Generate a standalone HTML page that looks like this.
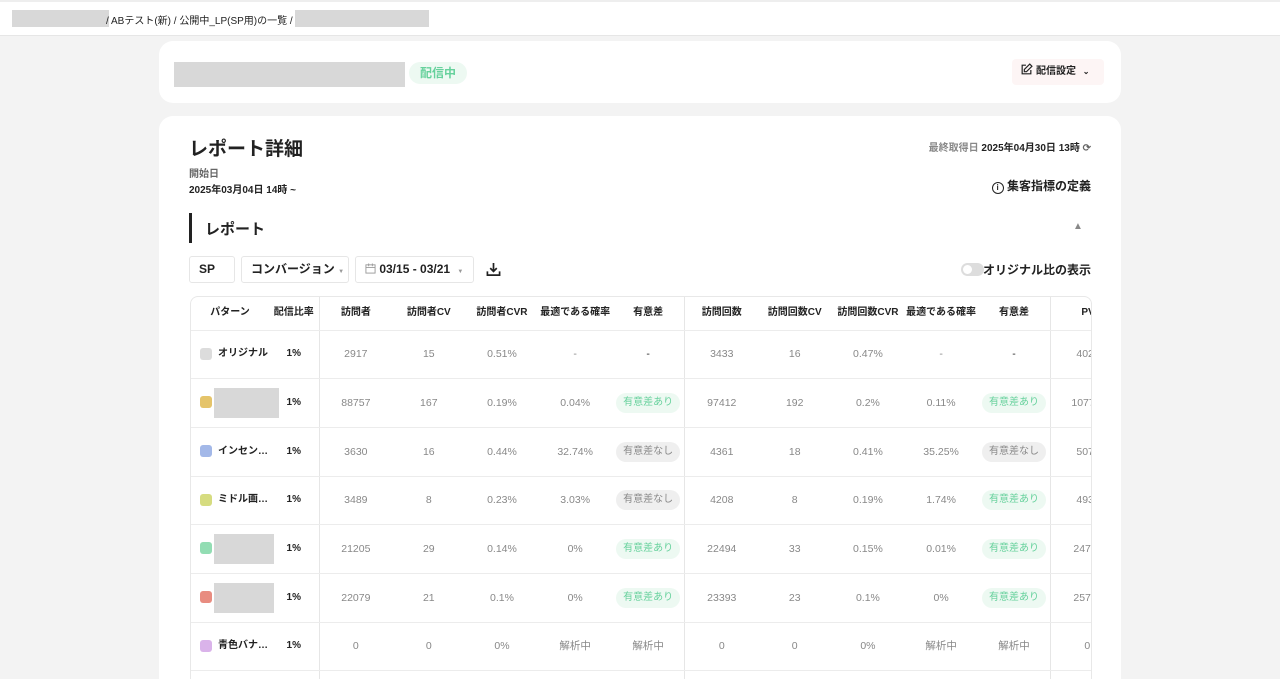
<!DOCTYPE html>
<html><head><meta charset="utf-8">
<style>
*{box-sizing:border-box;margin:0;padding:0}
html,body{width:1280px;height:679px;overflow:hidden}
body{background:#f3f3f3;font-family:"Liberation Sans","Noto Sans CJK JP",sans-serif;color:#222;position:relative}
.top{position:absolute;left:0;top:0;width:1280px;height:36px;background:#fff;border-top:2px solid #eee;border-bottom:1px solid #e6e6e6}
.ph{background:#d8d8d8;position:absolute}
.card{position:absolute;background:#fff;border-radius:14px}
.abs{position:absolute;white-space:nowrap}
.wrap{position:absolute;left:190px;top:296px;width:902px;height:383px;overflow:hidden;border:1px solid #e8e8e8;border-bottom:none;border-radius:8px 8px 0 0}
table{border-collapse:collapse;table-layout:fixed;width:900px}
td,th{height:48.7px;text-align:center;vertical-align:middle;font-size:10.5px;color:#888;border-bottom:1px solid #ececec;white-space:nowrap;overflow:hidden;line-height:14px}
th{height:33px;color:#222;font-weight:bold;font-size:10px}
.bl{border-left:1px solid #e6e6e6}
.pat{text-align:left;padding-left:9px;color:#222;font-weight:bold;font-size:10px;overflow:visible;position:relative}
.sw{display:inline-block;width:12px;height:12px;border-radius:3px;vertical-align:middle;margin-right:6px}
.r{color:#222;font-weight:bold;font-size:10px}
.b{display:inline-block;padding:3px 7px;border-radius:10px;font-size:10px;vertical-align:middle;line-height:14px}
.y{background:#edf9f2;color:#66d19c}
.n{background:#efefef;color:#888}
.pv{text-align:left;padding-left:25px}
.gp{position:absolute;top:9px;left:23px;height:30px;background:#d8d8d8}
</style></head><body>
<div class="top">
<div class="ph" style="left:12px;top:8px;width:97px;height:17px"></div>
<div class="abs" style="left:106px;top:10px;font-size:10px;color:#222">/ ABテスト(新) / 公開中_LP(SP用)の一覧 /</div>
<div class="ph" style="left:295px;top:8px;width:134px;height:17px"></div>
</div>
<div class="card" style="left:159px;top:41px;width:962px;height:62px">
<div class="ph" style="left:15px;top:21px;width:231px;height:25px"></div>
<div class="abs" style="left:250px;top:21px;height:22px;padding:0 11px;line-height:22px;border-radius:11px;background:#edf9f2;color:#66d19c;font-size:12px;font-weight:bold">配信中</div>
<div class="abs" style="left:853px;top:18px;width:92px;height:26px;background:#fdf5f5;border-radius:4px;font-size:10px;font-weight:bold;line-height:26px;padding-left:8px">
<svg width="13" height="13" viewBox="0 0 24 24" style="vertical-align:-2px;margin-right:3px" fill="none" stroke="#222" stroke-width="2.2"><path d="M11 4H4v16h16v-7"/><path d="M18 2l4 4-10 10H8v-4z"/></svg>配信設定 <span style="font-size:8px;margin-left:4px">⌄</span></div>
</div>
<div class="card" style="left:159px;top:116px;width:962px;height:563px;border-radius:14px 14px 0 0">
<div class="abs" style="left:30px;top:18px;font-size:19px;font-weight:bold">レポート詳細</div>
<div class="abs" style="left:30px;top:49px;font-size:10px;color:#666;font-weight:bold">開始日</div>
<div class="abs" style="left:30px;top:65px;font-size:10px;font-weight:bold">2025年03月04日 14時 ~</div>
<div class="abs" style="right:30px;top:23px;font-size:10px;font-weight:bold"><span style="color:#888">最終取得日</span> 2025年04月30日 13時 <span style="color:#666">⟳</span></div>
<div class="abs" style="right:30px;top:61px;font-size:12px;font-weight:bold"><span style="display:inline-block;width:12px;height:12px;border:1.5px solid #222;border-radius:50%;font-size:8px;line-height:9px;text-align:center;vertical-align:0">i</span> 集客指標の定義</div>
<div class="abs" style="left:30px;top:97px;width:3px;height:30px;background:#222"></div>
<div class="abs" style="left:46px;top:102px;font-size:15px;font-weight:bold">レポート</div>
<div class="abs" style="left:914px;top:105px;font-size:10px;color:#888">▲</div>
<div class="abs" style="left:30px;top:140px;width:46px;height:27px;border:1px solid #e6e6e6;border-radius:3px;font-size:12px;font-weight:bold;line-height:25px;padding-left:9px">SP</div>
<div class="abs" style="left:82px;top:140px;width:108px;height:27px;border:1px solid #e6e6e6;border-radius:3px;font-size:12px;font-weight:bold;line-height:25px;padding-left:9px">コンバージョン <span style="font-size:6px;color:#999">▼</span></div>
<div class="abs" style="left:196px;top:140px;width:119px;height:27px;border:1px solid #e6e6e6;border-radius:3px;font-size:12px;font-weight:bold;line-height:25px;padding-left:9px"><svg width="11" height="11" viewBox="0 0 12 12" fill="none" stroke="#999" style="vertical-align:-1px"><rect x="1" y="2" width="10" height="9"/><path d="M1 5h10M4 0.5v3M8 0.5v3"/></svg> 03/15 - 03/21 <span style="font-size:6px;color:#999;margin-left:4px">▼</span></div>
<svg class="abs" style="left:327px;top:146px" width="15" height="15" viewBox="0 0 16 16" fill="none" stroke="#222" stroke-width="1.8"><path d="M8 1v9M4.5 6.5L8 10l3.5-3.5M1.5 10v4h13v-4"/></svg>
<div class="abs" style="left:802px;top:147px;width:23px;height:13px;border-radius:7px;background:#ddd"><div style="width:9px;height:9px;border-radius:50%;background:#fff;margin:2px"></div></div>
<div class="abs" style="right:30px;top:145px;font-size:12px;font-weight:bold">オリジナル比の表示</div>
</div>
<div class="wrap"><table>
<colgroup><col style="width:78px"><col style="width:50px"><col style="width:73.2px"><col style="width:73.2px"><col style="width:73.2px"><col style="width:73.2px"><col style="width:73.2px"><col style="width:73.2px"><col style="width:73.2px"><col style="width:73.2px"><col style="width:73.2px"><col style="width:73.2px"><col style="width:40px"></colgroup>
<tr><th>パターン</th><th>配信比率</th><th class="bl">訪問者</th><th>訪問者CV</th><th>訪問者CVR</th><th>最適である確率</th><th>有意差</th><th class="bl">訪問回数</th><th>訪問回数CV</th><th>訪問回数CVR</th><th>最適である確率</th><th>有意差</th><th class="bl pv" style="padding-left:30px">PV</th></tr>
<tr><td class="pat"><span class="sw" style="background:#dcdcdc"></span>オリジナル</td><td class="r">1%</td><td class="bl">2917</td><td>15</td><td>0.51%</td><td>-</td><td style="color:#222">-</td><td class="bl">3433</td><td>16</td><td>0.47%</td><td>-</td><td style="color:#222">-</td><td class="bl pv">402</td></tr>
<tr><td class="pat"><span class="sw" style="background:#e5c46a"></span><span class="gp" style="width:65px"></span></td><td class="r">1%</td><td class="bl">88757</td><td>167</td><td>0.19%</td><td>0.04%</td><td><span class="b y">有意差あり</span></td><td class="bl">97412</td><td>192</td><td>0.2%</td><td>0.11%</td><td><span class="b y">有意差あり</span></td><td class="bl pv" style="padding-left:20px">1077</td></tr>
<tr><td class="pat"><span class="sw" style="background:#a3b8e8"></span>インセン…</td><td class="r">1%</td><td class="bl">3630</td><td>16</td><td>0.44%</td><td>32.74%</td><td><span class="b n">有意差なし</span></td><td class="bl">4361</td><td>18</td><td>0.41%</td><td>35.25%</td><td><span class="b n">有意差なし</span></td><td class="bl pv">507</td></tr>
<tr><td class="pat"><span class="sw" style="background:#d6dc80"></span>ミドル画…</td><td class="r">1%</td><td class="bl">3489</td><td>8</td><td>0.23%</td><td>3.03%</td><td><span class="b n">有意差なし</span></td><td class="bl">4208</td><td>8</td><td>0.19%</td><td>1.74%</td><td><span class="b y">有意差あり</span></td><td class="bl pv">493</td></tr>
<tr><td class="pat"><span class="sw" style="background:#92ddb3"></span><span class="gp" style="width:60px"></span></td><td class="r">1%</td><td class="bl">21205</td><td>29</td><td>0.14%</td><td>0%</td><td><span class="b y">有意差あり</span></td><td class="bl">22494</td><td>33</td><td>0.15%</td><td>0.01%</td><td><span class="b y">有意差あり</span></td><td class="bl pv" style="padding-left:22px">2474</td></tr>
<tr><td class="pat"><span class="sw" style="background:#e88c80"></span><span class="gp" style="width:60px"></span></td><td class="r">1%</td><td class="bl">22079</td><td>21</td><td>0.1%</td><td>0%</td><td><span class="b y">有意差あり</span></td><td class="bl">23393</td><td>23</td><td>0.1%</td><td>0%</td><td><span class="b y">有意差あり</span></td><td class="bl pv" style="padding-left:22px">2571</td></tr>
<tr><td class="pat"><span class="sw" style="background:#dab3ea"></span>青色バナ…</td><td class="r">1%</td><td class="bl">0</td><td>0</td><td>0%</td><td>解析中</td><td>解析中</td><td class="bl">0</td><td>0</td><td>0%</td><td>解析中</td><td>解析中</td><td class="bl pv" style="padding-left:33px">0</td></tr>
<tr><td></td><td></td><td class="bl"></td><td></td><td></td><td></td><td></td><td class="bl"></td><td></td><td></td><td></td><td></td><td class="bl"></td></tr>
</table></div>
</body></html>
